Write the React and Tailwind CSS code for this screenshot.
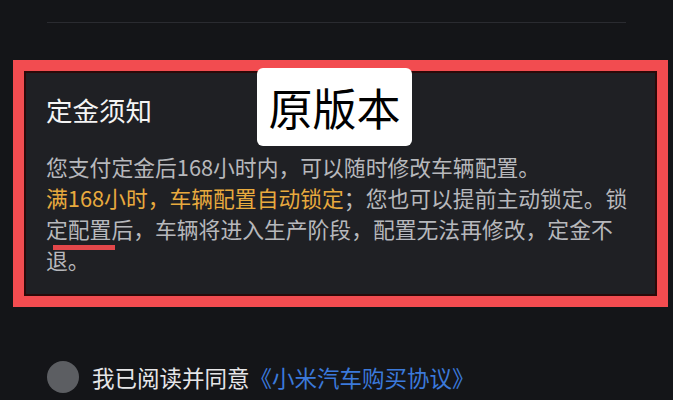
export default function App() {
  const cjk = { fontFamily: '"Noto Sans CJK SC", "Noto Sans", sans-serif' };
  return (
    <div
      className="relative w-[673px] h-[400px] overflow-hidden bg-[#141518]"
      style={cjk}
    >
      {/* top divider */}
      <div className="pt-[22px]">
        <div className="mx-[47px] h-px bg-[#2a2b30]" />
      </div>

      {/* highlighted notice card */}
      <div className="mt-[37px] ml-[13px] w-[655px] h-[247px] bg-[#f24c50] p-[11px]">
        <div className="relative h-full border-2 border-[#2b0909] bg-[#1f2024] pl-[20px] pt-[21px]">
          <div className="text-[26.5px] leading-[32px] font-normal text-[#f4f4f4]">
            定金须知
          </div>
          <div className="mt-[25px] text-[21.8px] leading-[31px] text-[#b7b8bc]">
            <div>您支付定金后168小时内，可以随时修改车辆配置。</div>
            <div className="whitespace-nowrap">
              <span className="text-[#e8aa3e]">满168小时，车辆配置自动锁定</span>
              ；您也可以提前主动锁定。锁
            </div>
            <div className="whitespace-nowrap">
              定配置后，车辆将进入生产阶段，配置无法再修改，定金不
            </div>
            <div>退。</div>
          </div>
          {/* red annotation stroke */}
          <div className="absolute left-[27px] top-[172px] w-[62px] h-[5px] bg-[#e3474a]" />
        </div>
      </div>

      {/* overlay label */}
      <div className="absolute left-[257px] top-[68px] w-[155px] h-[78px] rounded-md bg-white flex items-center justify-center">
        <span className="text-[44px] leading-none text-black">原版本</span>
      </div>

      {/* agreement row */}
      <div className="mt-[54px] ml-[47px] flex items-center gap-[13px]">
        <div className="w-[32px] h-[32px] rounded-full bg-[#5c5e62]" />
        <div className="text-[22.5px] leading-[32px] text-[#e6e6e8] whitespace-nowrap">
          我已阅读并同意
          <span className="text-[#3b79da]">《小米汽车购买协议》</span>
        </div>
      </div>
    </div>
  );
}
